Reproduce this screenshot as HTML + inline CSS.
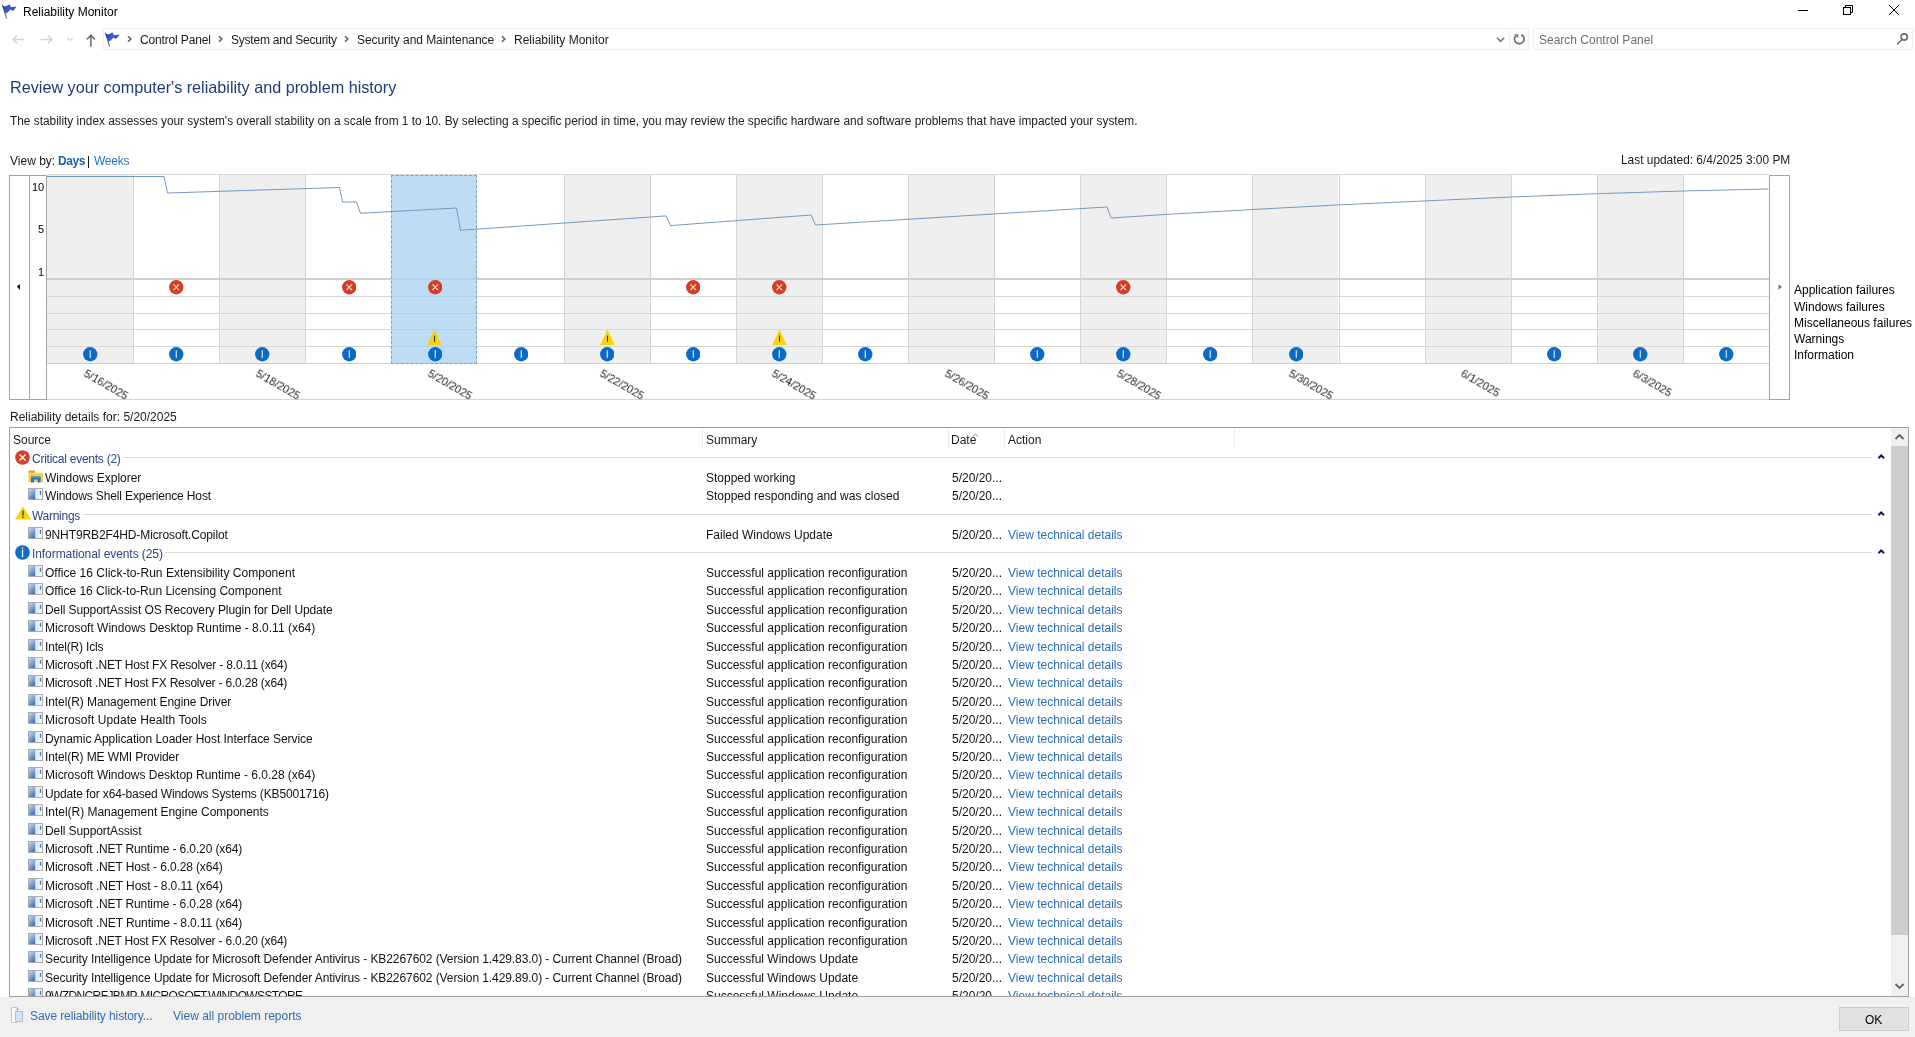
<!DOCTYPE html><html><head><meta charset="utf-8"><style>
html,body{margin:0;padding:0;}
body{width:1915px;height:1037px;position:relative;overflow:hidden;background:#fff;font-family:"Liberation Sans", sans-serif;}
.t{position:absolute;white-space:nowrap;font-family:"Liberation Sans", sans-serif;will-change:transform;}
.lnk{color:#0066cc;}
</style></head><body>
<svg width="0" height="0" style="position:absolute"><defs><linearGradient id="appg" x1="0" y1="0" x2="0.6" y2="1"><stop offset="0" stop-color="#c4daf0"/><stop offset="1" stop-color="#4677b8"/></linearGradient><symbol id="appico" viewBox="0 0 15 12"><rect x="0.5" y="0.5" width="14" height="11" fill="#f3f6fa" stroke="#a9abb0"/><rect x="1" y="1" width="6.5" height="10" fill="url(#appg)"/><rect x="7.5" y="1" width="3.5" height="10" fill="#e4ebf3"/><rect x="11.8" y="2.8" width="1.4" height="4" fill="#4b7cb6"/></symbol></defs></svg>
<svg style="position:absolute;left:0;top:0" width="20" height="20" viewBox="0 0 20 20"><defs><linearGradient id="fg" x1="0" y1="0" x2="1" y2="0.3"><stop offset="0" stop-color="#1d2f9c"/><stop offset="0.55" stop-color="#3f5fd6"/><stop offset="1" stop-color="#2f46b8"/></linearGradient></defs><path d="M2.3 4.5L6.6 18.5" stroke="#5a5a5a" stroke-width="1"/><path d="M2.2 5.8L5.8 6.4L9.3 4.2L11.2 7.2L16.6 6.4L13 10.9L10.6 9.6L7.6 12.4L5.3 13.6Z" fill="url(#fg)"/></svg>
<div class="t " style="left:22.5px;top:6px;font-size:12px;line-height:12px;color:#000;">Reliability Monitor</div>
<div style="position:absolute;left:1798px;top:10px;width:10px;height:1px;background:#000"></div>
<svg style="position:absolute;left:1840px;top:2px" width="16" height="16" viewBox="1840 2 16 16"><rect x="1843.5" y="7.5" width="7" height="7" fill="none" stroke="#000"/><path d="M1845.5 7.5V5.5H1852.5V12.5H1850.5" fill="none" stroke="#000"/></svg>
<svg style="position:absolute;left:1886px;top:2px" width="16" height="16" viewBox="1886 2 16 16"><path d="M1889 5L1899 15M1899 5L1889 15" stroke="#000" stroke-width="1"/></svg>
<svg style="position:absolute;left:0;top:28px" width="100" height="24" viewBox="0 28 100 24"><path d="M24 39.4H13.5M17 35.5L13 39.4L17 43.3" fill="none" stroke="#d2d2d2" stroke-width="1.5"/><path d="M40.5 39.4H51.5M48 35.5L52 39.4L48 43.3" fill="none" stroke="#d2d2d2" stroke-width="1.5"/><path d="M67 37.5L70 40.5L73 37.5" fill="none" stroke="#dadada" stroke-width="1.2"/><path d="M90.9 46.8V35.5M86.9 39.5L90.9 35.2L94.9 39.5" fill="none" stroke="#6a6a6a" stroke-width="1.5"/></svg>
<div style="position:absolute;left:103px;top:28px;width:1426px;height:22px;border:1px solid #f1f1f1;border-bottom-color:#ebebeb;box-sizing:border-box"></div>
<div style="position:absolute;left:1509px;top:29px;width:1px;height:20px;background:#efefef"></div>
<svg style="position:absolute;left:103px;top:28px" width="20" height="20" viewBox="0 0 20 20"><defs><linearGradient id="fg2" x1="0" y1="0" x2="1" y2="0.3"><stop offset="0" stop-color="#1d2f9c"/><stop offset="0.55" stop-color="#3f5fd6"/><stop offset="1" stop-color="#2f46b8"/></linearGradient></defs><path d="M2.3 4.5L6.6 18.5" stroke="#5a5a5a" stroke-width="1"/><path d="M2.2 5.8L5.8 6.4L9.3 4.2L11.2 7.2L16.6 6.4L13 10.9L10.6 9.6L7.6 12.4L5.3 13.6Z" fill="url(#fg2)"/></svg>
<svg style="position:absolute;left:127px;top:35px" width="5" height="8" viewBox="0 0 5 8"><path d="M1 1.2L3.8 4L1 6.8" fill="none" stroke="#5a5a5a" stroke-width="1.5"/></svg>
<svg style="position:absolute;left:218px;top:35px" width="5" height="8" viewBox="0 0 5 8"><path d="M1 1.2L3.8 4L1 6.8" fill="none" stroke="#5a5a5a" stroke-width="1.5"/></svg>
<svg style="position:absolute;left:344px;top:35px" width="5" height="8" viewBox="0 0 5 8"><path d="M1 1.2L3.8 4L1 6.8" fill="none" stroke="#5a5a5a" stroke-width="1.5"/></svg>
<svg style="position:absolute;left:501px;top:35px" width="5" height="8" viewBox="0 0 5 8"><path d="M1 1.2L3.8 4L1 6.8" fill="none" stroke="#5a5a5a" stroke-width="1.5"/></svg>
<div class="t " style="left:139.5px;top:34px;font-size:12px;line-height:12px;color:#1a1a1a;letter-spacing:-0.15px">Control Panel</div>
<div class="t " style="left:230.5px;top:34px;font-size:12px;line-height:12px;color:#1a1a1a;letter-spacing:-0.22px">System and Security</div>
<div class="t " style="left:356.5px;top:34px;font-size:12px;line-height:12px;color:#1a1a1a;letter-spacing:-0.07px">Security and Maintenance</div>
<div class="t " style="left:513.5px;top:34px;font-size:12px;line-height:12px;color:#1a1a1a;">Reliability Monitor</div>
<svg style="position:absolute;left:1490px;top:26px" width="44" height="26" viewBox="1490 26 44 26"><path d="M1497 37.8L1500.6 41.4L1504.2 37.8" fill="none" stroke="#767676" stroke-width="1.6"/><path d="M1521.3 34.6A4.8 4.8 0 1 1 1515.6 35.8" fill="none" stroke="#777" stroke-width="1.9"/><path d="M1514 34.2H1518.2V38.2Z" fill="#777"/></svg>
<div style="position:absolute;left:1533px;top:28px;width:380px;height:22px;border:1px solid #f1f1f1;border-bottom-color:#ebebeb;box-sizing:border-box"></div>
<div class="t " style="left:1538.5px;top:34px;font-size:12px;line-height:12px;color:#6d6d6d;">Search Control Panel</div>
<svg style="position:absolute;left:1880px;top:24px" width="35" height="30" viewBox="1880 24 35 30"><circle cx="1904.2" cy="37" r="3.1" fill="none" stroke="#6e6e6e" stroke-width="1.6"/><path d="M1902 39.3L1897.6 44" stroke="#6e6e6e" stroke-width="1.6" stroke-linecap="round"/></svg>
<div class="t " style="left:9.5px;top:79px;font-size:16.2px;line-height:16.2px;color:#1f3a7a;">Review your computer's reliability and problem history</div>
<div class="t " style="left:9.5px;top:116px;font-size:11.87px;line-height:11.87px;color:#1a1a1a;">The stability index assesses your system's overall stability on a scale from 1 to 10. By selecting a specific period in time, you may review the specific hardware and software problems that have impacted your system.</div>
<div class="t " style="left:9.5px;top:155px;font-size:12px;line-height:12px;color:#1a1a1a;">View by:</div>
<div class="t " style="left:58px;top:155px;font-size:12px;line-height:12px;color:#1a5fb0;letter-spacing:-0.45px"><b>Days</b></div>
<div class="t " style="left:87px;top:155px;font-size:12px;line-height:12px;color:#000;">|</div>
<div class="t " style="left:94px;top:155px;font-size:12px;line-height:12px;color:#2a74c6;letter-spacing:-0.25px">Weeks</div>
<div class="t " style="left:1621px;top:155px;font-size:11.9px;line-height:11.9px;color:#1a1a1a;">Last updated: 6/4/2025 3:00 PM</div>
<div style="position:absolute;left:9px;top:175px;width:38px;height:225px;border:1px solid #a4a4a4;box-sizing:border-box"></div>
<div style="position:absolute;left:29px;top:175px;width:1px;height:225px;background:#a4a4a4"></div>
<div style="position:absolute;left:47.00px;top:175px;width:86.10px;height:189px;background:#efefef"></div>
<div style="position:absolute;left:219.20px;top:175px;width:86.10px;height:189px;background:#efefef"></div>
<div style="position:absolute;left:563.60px;top:175px;width:86.10px;height:189px;background:#efefef"></div>
<div style="position:absolute;left:735.80px;top:175px;width:86.10px;height:189px;background:#efefef"></div>
<div style="position:absolute;left:908.00px;top:175px;width:86.10px;height:189px;background:#efefef"></div>
<div style="position:absolute;left:1080.20px;top:175px;width:86.10px;height:189px;background:#efefef"></div>
<div style="position:absolute;left:1252.40px;top:175px;width:86.10px;height:189px;background:#efefef"></div>
<div style="position:absolute;left:1424.60px;top:175px;width:86.10px;height:189px;background:#efefef"></div>
<div style="position:absolute;left:1596.80px;top:175px;width:86.10px;height:189px;background:#efefef"></div>
<div style="position:absolute;left:133.10px;top:175px;width:1px;height:189px;background:#d4d4d4"></div>
<div style="position:absolute;left:219.20px;top:175px;width:1px;height:189px;background:#d4d4d4"></div>
<div style="position:absolute;left:305.30px;top:175px;width:1px;height:189px;background:#d4d4d4"></div>
<div style="position:absolute;left:563.60px;top:175px;width:1px;height:189px;background:#d4d4d4"></div>
<div style="position:absolute;left:649.70px;top:175px;width:1px;height:189px;background:#d4d4d4"></div>
<div style="position:absolute;left:735.80px;top:175px;width:1px;height:189px;background:#d4d4d4"></div>
<div style="position:absolute;left:821.90px;top:175px;width:1px;height:189px;background:#d4d4d4"></div>
<div style="position:absolute;left:908.00px;top:175px;width:1px;height:189px;background:#d4d4d4"></div>
<div style="position:absolute;left:994.10px;top:175px;width:1px;height:189px;background:#d4d4d4"></div>
<div style="position:absolute;left:1080.20px;top:175px;width:1px;height:189px;background:#d4d4d4"></div>
<div style="position:absolute;left:1166.30px;top:175px;width:1px;height:189px;background:#d4d4d4"></div>
<div style="position:absolute;left:1252.40px;top:175px;width:1px;height:189px;background:#d4d4d4"></div>
<div style="position:absolute;left:1338.50px;top:175px;width:1px;height:189px;background:#d4d4d4"></div>
<div style="position:absolute;left:1424.60px;top:175px;width:1px;height:189px;background:#d4d4d4"></div>
<div style="position:absolute;left:1510.70px;top:175px;width:1px;height:189px;background:#d4d4d4"></div>
<div style="position:absolute;left:1596.80px;top:175px;width:1px;height:189px;background:#d4d4d4"></div>
<div style="position:absolute;left:1682.90px;top:175px;width:1px;height:189px;background:#d4d4d4"></div>
<div style="position:absolute;left:47px;top:174px;width:1722px;height:1px;background:#d8d8d8"></div>
<div style="position:absolute;left:47px;top:278px;width:1722px;height:2px;background:#cfcfcf"></div>
<div style="position:absolute;left:47px;top:296px;width:1722px;height:1px;background:#d6d6d6"></div>
<div style="position:absolute;left:47px;top:313px;width:1722px;height:1px;background:#d6d6d6"></div>
<div style="position:absolute;left:47px;top:329px;width:1722px;height:1px;background:#d6d6d6"></div>
<div style="position:absolute;left:47px;top:346px;width:1722px;height:1px;background:#d6d6d6"></div>
<div style="position:absolute;left:47px;top:363px;width:1722px;height:1px;background:#cfcfcf"></div>
<div style="position:absolute;left:47px;top:399px;width:1722px;height:1px;background:#d4d4d4"></div>
<div style="position:absolute;left:391.40px;top:175px;width:86.10px;height:189px;background:rgba(170,208,242,0.75);border:1px dashed #8a9cb0;box-sizing:border-box"></div>
<div style="position:absolute;left:1769px;top:175px;width:21px;height:225px;border:1px solid #a4a4a4;box-sizing:border-box"></div>
<svg style="position:absolute;left:16px;top:283px" width="5" height="8" viewBox="0 0 5 8"><path d="M3.9 0.9L1 3.6L3.9 7Z" fill="#000"/></svg>
<svg style="position:absolute;left:1778px;top:283px" width="5" height="8" viewBox="0 0 5 8"><path d="M0.6 1.2L3.8 3.9L0.6 6.7Z" fill="#666"/></svg>
<div class="t " style="left:32px;top:182px;font-size:11px;line-height:11px;color:#000;">10</div>
<div class="t " style="left:37.5px;top:224px;font-size:11px;line-height:11px;color:#000;">5</div>
<div class="t " style="left:37.5px;top:267px;font-size:11px;line-height:11px;color:#000;">1</div>
<svg style="position:absolute;left:0;top:0" width="1915" height="420"><polyline points="47,176.5 164,176.5 167.5,193 339.5,187.5 342.5,202 356.5,202 360.5,213.3 456.5,208 460.5,230.3 666,215.9 670.5,225.6 811,215 815.5,225 1107,207 1111,218 1166.4,214.4 1252.6,209.5 1339,204.9 1425.3,200.9 1511.8,197 1597.4,193.7 1683.6,191 1768.5,189" fill="none" stroke="#7499c4" stroke-width="1"/></svg>
<svg style="position:absolute;left:83.25px;top:347.45px" width="14.5" height="14.5" viewBox="0 0 16 16"><circle cx="8" cy="8" r="7.9" fill="#0b6bc4"/><rect x="7.4" y="3.6" width="1.2" height="8.4" fill="#e6f4ff"/></svg>
<svg style="position:absolute;left:169.35px;top:347.45px" width="14.5" height="14.5" viewBox="0 0 16 16"><circle cx="8" cy="8" r="7.9" fill="#0b6bc4"/><rect x="7.4" y="3.6" width="1.2" height="8.4" fill="#e6f4ff"/></svg>
<svg style="position:absolute;left:255.45px;top:347.45px" width="14.5" height="14.5" viewBox="0 0 16 16"><circle cx="8" cy="8" r="7.9" fill="#0b6bc4"/><rect x="7.4" y="3.6" width="1.2" height="8.4" fill="#e6f4ff"/></svg>
<svg style="position:absolute;left:341.55px;top:347.45px" width="14.5" height="14.5" viewBox="0 0 16 16"><circle cx="8" cy="8" r="7.9" fill="#0b6bc4"/><rect x="7.4" y="3.6" width="1.2" height="8.4" fill="#e6f4ff"/></svg>
<svg style="position:absolute;left:427.65px;top:347.45px" width="14.5" height="14.5" viewBox="0 0 16 16"><circle cx="8" cy="8" r="7.9" fill="#0b6bc4"/><rect x="7.4" y="3.6" width="1.2" height="8.4" fill="#e6f4ff"/></svg>
<svg style="position:absolute;left:513.75px;top:347.45px" width="14.5" height="14.5" viewBox="0 0 16 16"><circle cx="8" cy="8" r="7.9" fill="#0b6bc4"/><rect x="7.4" y="3.6" width="1.2" height="8.4" fill="#e6f4ff"/></svg>
<svg style="position:absolute;left:599.85px;top:347.45px" width="14.5" height="14.5" viewBox="0 0 16 16"><circle cx="8" cy="8" r="7.9" fill="#0b6bc4"/><rect x="7.4" y="3.6" width="1.2" height="8.4" fill="#e6f4ff"/></svg>
<svg style="position:absolute;left:685.95px;top:347.45px" width="14.5" height="14.5" viewBox="0 0 16 16"><circle cx="8" cy="8" r="7.9" fill="#0b6bc4"/><rect x="7.4" y="3.6" width="1.2" height="8.4" fill="#e6f4ff"/></svg>
<svg style="position:absolute;left:772.05px;top:347.45px" width="14.5" height="14.5" viewBox="0 0 16 16"><circle cx="8" cy="8" r="7.9" fill="#0b6bc4"/><rect x="7.4" y="3.6" width="1.2" height="8.4" fill="#e6f4ff"/></svg>
<svg style="position:absolute;left:858.15px;top:347.45px" width="14.5" height="14.5" viewBox="0 0 16 16"><circle cx="8" cy="8" r="7.9" fill="#0b6bc4"/><rect x="7.4" y="3.6" width="1.2" height="8.4" fill="#e6f4ff"/></svg>
<svg style="position:absolute;left:1030.35px;top:347.45px" width="14.5" height="14.5" viewBox="0 0 16 16"><circle cx="8" cy="8" r="7.9" fill="#0b6bc4"/><rect x="7.4" y="3.6" width="1.2" height="8.4" fill="#e6f4ff"/></svg>
<svg style="position:absolute;left:1116.45px;top:347.45px" width="14.5" height="14.5" viewBox="0 0 16 16"><circle cx="8" cy="8" r="7.9" fill="#0b6bc4"/><rect x="7.4" y="3.6" width="1.2" height="8.4" fill="#e6f4ff"/></svg>
<svg style="position:absolute;left:1202.55px;top:347.45px" width="14.5" height="14.5" viewBox="0 0 16 16"><circle cx="8" cy="8" r="7.9" fill="#0b6bc4"/><rect x="7.4" y="3.6" width="1.2" height="8.4" fill="#e6f4ff"/></svg>
<svg style="position:absolute;left:1288.65px;top:347.45px" width="14.5" height="14.5" viewBox="0 0 16 16"><circle cx="8" cy="8" r="7.9" fill="#0b6bc4"/><rect x="7.4" y="3.6" width="1.2" height="8.4" fill="#e6f4ff"/></svg>
<svg style="position:absolute;left:1546.95px;top:347.45px" width="14.5" height="14.5" viewBox="0 0 16 16"><circle cx="8" cy="8" r="7.9" fill="#0b6bc4"/><rect x="7.4" y="3.6" width="1.2" height="8.4" fill="#e6f4ff"/></svg>
<svg style="position:absolute;left:1633.05px;top:347.45px" width="14.5" height="14.5" viewBox="0 0 16 16"><circle cx="8" cy="8" r="7.9" fill="#0b6bc4"/><rect x="7.4" y="3.6" width="1.2" height="8.4" fill="#e6f4ff"/></svg>
<svg style="position:absolute;left:1719.15px;top:347.45px" width="14.5" height="14.5" viewBox="0 0 16 16"><circle cx="8" cy="8" r="7.9" fill="#0b6bc4"/><rect x="7.4" y="3.6" width="1.2" height="8.4" fill="#e6f4ff"/></svg>
<svg style="position:absolute;left:169.35px;top:280.45px" width="14.5" height="14.5" viewBox="0 0 16 16"><circle cx="8" cy="8" r="7.9" fill="#d63c22"/><path d="M4.9 4.9L11.1 11.1M11.1 4.9L4.9 11.1" stroke="#fbe3dc" stroke-width="1.2"/></svg>
<svg style="position:absolute;left:341.55px;top:280.45px" width="14.5" height="14.5" viewBox="0 0 16 16"><circle cx="8" cy="8" r="7.9" fill="#d63c22"/><path d="M4.9 4.9L11.1 11.1M11.1 4.9L4.9 11.1" stroke="#fbe3dc" stroke-width="1.2"/></svg>
<svg style="position:absolute;left:427.65px;top:280.45px" width="14.5" height="14.5" viewBox="0 0 16 16"><circle cx="8" cy="8" r="7.9" fill="#d63c22"/><path d="M4.9 4.9L11.1 11.1M11.1 4.9L4.9 11.1" stroke="#fbe3dc" stroke-width="1.2"/></svg>
<svg style="position:absolute;left:685.95px;top:280.45px" width="14.5" height="14.5" viewBox="0 0 16 16"><circle cx="8" cy="8" r="7.9" fill="#d63c22"/><path d="M4.9 4.9L11.1 11.1M11.1 4.9L4.9 11.1" stroke="#fbe3dc" stroke-width="1.2"/></svg>
<svg style="position:absolute;left:772.05px;top:280.45px" width="14.5" height="14.5" viewBox="0 0 16 16"><circle cx="8" cy="8" r="7.9" fill="#d63c22"/><path d="M4.9 4.9L11.1 11.1M11.1 4.9L4.9 11.1" stroke="#fbe3dc" stroke-width="1.2"/></svg>
<svg style="position:absolute;left:1116.45px;top:280.45px" width="14.5" height="14.5" viewBox="0 0 16 16"><circle cx="8" cy="8" r="7.9" fill="#d63c22"/><path d="M4.9 4.9L11.1 11.1M11.1 4.9L4.9 11.1" stroke="#fbe3dc" stroke-width="1.2"/></svg>
<svg style="position:absolute;left:427.40px;top:329px" width="15" height="17" viewBox="0 0 16 17"><path d="M8 0.3L15.9 16.6H0.1Z" fill="#f3d40c"/><rect x="7.45" y="6.5" width="1.1" height="6.5" fill="#3a3000"/></svg>
<svg style="position:absolute;left:599.60px;top:329px" width="15" height="17" viewBox="0 0 16 17"><path d="M8 0.3L15.9 16.6H0.1Z" fill="#f3d40c"/><rect x="7.45" y="6.5" width="1.1" height="6.5" fill="#3a3000"/></svg>
<svg style="position:absolute;left:771.80px;top:329px" width="15" height="17" viewBox="0 0 16 17"><path d="M8 0.3L15.9 16.6H0.1Z" fill="#f3d40c"/><rect x="7.45" y="6.5" width="1.1" height="6.5" fill="#3a3000"/></svg>
<div class="t" style="left:87.5px;top:367px;font-size:11px;line-height:13px;color:#222;transform:rotate(30deg);transform-origin:0 0">5/16/2025</div>
<div class="t" style="left:259.7px;top:367px;font-size:11px;line-height:13px;color:#222;transform:rotate(30deg);transform-origin:0 0">5/18/2025</div>
<div class="t" style="left:431.9px;top:367px;font-size:11px;line-height:13px;color:#222;transform:rotate(30deg);transform-origin:0 0">5/20/2025</div>
<div class="t" style="left:604.1px;top:367px;font-size:11px;line-height:13px;color:#222;transform:rotate(30deg);transform-origin:0 0">5/22/2025</div>
<div class="t" style="left:776.3px;top:367px;font-size:11px;line-height:13px;color:#222;transform:rotate(30deg);transform-origin:0 0">5/24/2025</div>
<div class="t" style="left:948.5px;top:367px;font-size:11px;line-height:13px;color:#222;transform:rotate(30deg);transform-origin:0 0">5/26/2025</div>
<div class="t" style="left:1120.7px;top:367px;font-size:11px;line-height:13px;color:#222;transform:rotate(30deg);transform-origin:0 0">5/28/2025</div>
<div class="t" style="left:1292.9px;top:367px;font-size:11px;line-height:13px;color:#222;transform:rotate(30deg);transform-origin:0 0">5/30/2025</div>
<div class="t" style="left:1465.1px;top:367px;font-size:11px;line-height:13px;color:#222;transform:rotate(30deg);transform-origin:0 0">6/1/2025</div>
<div class="t" style="left:1637.3px;top:367px;font-size:11px;line-height:13px;color:#222;transform:rotate(30deg);transform-origin:0 0">6/3/2025</div>
<div class="t " style="left:1793.5px;top:284px;font-size:12px;line-height:12px;color:#000;">Application failures</div>
<div class="t " style="left:1793.5px;top:301px;font-size:12px;line-height:12px;color:#000;">Windows failures</div>
<div class="t " style="left:1793.5px;top:317px;font-size:12px;line-height:12px;color:#000;">Miscellaneous failures</div>
<div class="t " style="left:1793.5px;top:333px;font-size:12px;line-height:12px;color:#000;">Warnings</div>
<div class="t " style="left:1793.5px;top:349px;font-size:12px;line-height:12px;color:#000;">Information</div>
<div class="t " style="left:9.5px;top:411px;font-size:12px;line-height:12px;color:#1a1a1a;">Reliability details for: 5/20/2025</div>
<div style="position:absolute;left:9px;top:427px;width:1900px;height:570px;border:1px solid #a0a0a0;box-sizing:border-box"></div>
<div class="t " style="left:12.5px;top:434px;font-size:12px;line-height:12px;color:#1a1a1a;">Source</div>
<div class="t " style="left:706px;top:434px;font-size:12px;line-height:12px;color:#1a1a1a;">Summary</div>
<div class="t " style="left:951px;top:434px;font-size:12px;line-height:12px;color:#1a1a1a;">Date</div>
<svg style="position:absolute;left:972px;top:433px" width="7" height="4" viewBox="0 0 7 4"><path d="M0.8 3.4L3.3 0.9L6.2 3.7" fill="none" stroke="#8a8a8a" stroke-width="1"/></svg>
<div class="t " style="left:1007.5px;top:434px;font-size:12px;line-height:12px;color:#1a1a1a;">Action</div>
<div style="position:absolute;left:702px;top:429px;width:1px;height:19px;background:#ededed"></div>
<div style="position:absolute;left:948px;top:429px;width:1px;height:19px;background:#ededed"></div>
<div style="position:absolute;left:1004px;top:429px;width:1px;height:19px;background:#ededed"></div>
<div style="position:absolute;left:1234px;top:429px;width:1px;height:19px;background:#ededed"></div>
<div style="position:absolute;left:1891px;top:428px;width:17px;height:568px;background:#f0f0f0"></div>
<div style="position:absolute;left:1891px;top:446px;width:17px;height:489px;background:#cdcdcd"></div>
<svg style="position:absolute;left:1894px;top:433px" width="11" height="7" viewBox="0 0 11 7"><path d="M1.5 6L5.5 2L9.5 6" fill="none" stroke="#606060" stroke-width="1.8"/></svg>
<svg style="position:absolute;left:1894px;top:983px" width="11" height="7" viewBox="0 0 11 7"><path d="M1.5 1L5.5 5L9.5 1" fill="none" stroke="#606060" stroke-width="1.8"/></svg>
<div style="position:absolute;left:10px;top:449px;width:1881px;height:547px;overflow:hidden">
<svg style="position:absolute;left:4.5px;top:0.9px" width="15" height="15" viewBox="0 0 16 16"><circle cx="8" cy="8" r="7.8" fill="#d4402b"/><path d="M4.8 4.8L11.2 11.2M11.2 4.8L4.8 11.2" stroke="#fff" stroke-width="1.3"/></svg>
<div class="t" style="left:21.5px;top:4.00px;font-size:12px;line-height:12px;color:#2e4582;letter-spacing:-0.250px">Critical events (2)</div>
<div class="gline" style="position:absolute;left:113.1px;top:8px;width:1748.9px;height:1px;background:#dcdcdc"></div>
<svg style="position:absolute;left:1867px;top:5px" width="9" height="6" viewBox="0 0 9 6"><path d="M1.5 4.2L4.2 1.4L7 4.2" fill="none" stroke="#0c1a5c" stroke-width="2"/></svg>
<svg style="position:absolute;left:18px;top:20.5px" width="16" height="13" viewBox="0 0 16 13"><rect x="0.5" y="0.5" width="6.5" height="2.6" fill="#d6a21c"/><rect x="0.5" y="2.8" width="14.6" height="9.2" fill="#f6cb4c"/><rect x="0.5" y="2.8" width="14.6" height="1.2" fill="#fbd968"/><path d="M3 12.6V7.6Q3 6.6 4 6.6H11.6Q12.6 6.6 12.6 7.6V12.6H9.6V9.6H6V12.6Z" fill="#2f76b8"/><rect x="3" y="6.6" width="9.6" height="1.4" fill="#3a98d0"/></svg>
<div class="t" style="left:34.5px;top:23.00px;font-size:12px;line-height:12px;color:#111;letter-spacing:-0.027px">Windows Explorer</div>
<div class="t" style="left:696px;top:23.00px;font-size:12px;line-height:12px;color:#111">Stopped working</div>
<div class="t" style="left:941.5px;top:23.00px;font-size:12px;line-height:12px;color:#111">5/20/20...</div>
<svg style="position:absolute;left:18px;top:39px" width="15" height="12" viewBox="0 0 15 12"><use href="#appico"/></svg>
<div class="t" style="left:34.5px;top:41.00px;font-size:12px;line-height:12px;color:#111;letter-spacing:-0.143px">Windows Shell Experience Host</div>
<div class="t" style="left:696px;top:41.00px;font-size:12px;line-height:12px;color:#111">Stopped responding and was closed</div>
<div class="t" style="left:941.5px;top:41.00px;font-size:12px;line-height:12px;color:#111">5/20/20...</div>
<svg style="position:absolute;left:4.5px;top:56.8px" width="16" height="14" viewBox="0 0 16 14"><path d="M8 0.2L15.9 13.4H0.1Z" fill="#f4d20e"/><rect x="7.35" y="4.6" width="1.3" height="5" fill="#3b3000"/><rect x="7.35" y="10.6" width="1.3" height="1.3" fill="#3b3000"/></svg>
<div class="t" style="left:21.5px;top:61.00px;font-size:12px;line-height:12px;color:#2e4582;letter-spacing:-0.280px">Warnings</div>
<div class="gline" style="position:absolute;left:72.5px;top:65px;width:1789.5px;height:1px;background:#dcdcdc"></div>
<svg style="position:absolute;left:1867px;top:62px" width="9" height="6" viewBox="0 0 9 6"><path d="M1.5 4.2L4.2 1.4L7 4.2" fill="none" stroke="#0c1a5c" stroke-width="2"/></svg>
<svg style="position:absolute;left:18px;top:78px" width="15" height="12" viewBox="0 0 15 12"><use href="#appico"/></svg>
<div class="t" style="left:34.5px;top:80.00px;font-size:12px;line-height:12px;color:#111;letter-spacing:-0.110px">9NHT9RB2F4HD-Microsoft.Copilot</div>
<div class="t" style="left:696px;top:80.00px;font-size:12px;line-height:12px;color:#111">Failed Windows Update</div>
<div class="t" style="left:941.5px;top:80.00px;font-size:12px;line-height:12px;color:#111">5/20/20...</div>
<div class="t" style="left:997.5px;top:80.00px;font-size:12px;line-height:12px;color:#2b6db8">View technical details</div>
<svg style="position:absolute;left:4.5px;top:95.9px" width="15" height="15" viewBox="0 0 16 16"><circle cx="8" cy="8" r="7.8" fill="#0d6ec6"/><rect x="7.3" y="5" width="1.4" height="8" fill="#fff"/><rect x="7.3" y="2.8" width="1.4" height="1.4" fill="#fff"/></svg>
<div class="t" style="left:21.5px;top:99.00px;font-size:12px;line-height:12px;color:#2e4582;letter-spacing:-0.075px">Informational events (25)</div>
<div class="gline" style="position:absolute;left:155.4px;top:103px;width:1706.6px;height:1px;background:#dcdcdc"></div>
<svg style="position:absolute;left:1867px;top:100px" width="9" height="6" viewBox="0 0 9 6"><path d="M1.5 4.2L4.2 1.4L7 4.2" fill="none" stroke="#0c1a5c" stroke-width="2"/></svg>
<svg style="position:absolute;left:18px;top:116px" width="15" height="12" viewBox="0 0 15 12"><use href="#appico"/></svg>
<div class="t" style="left:34.5px;top:118.00px;font-size:12px;line-height:12px;color:#111;letter-spacing:0.018px">Office 16 Click-to-Run Extensibility Component</div>
<div class="t" style="left:696px;top:118.00px;font-size:12px;line-height:12px;color:#111">Successful application reconfiguration</div>
<div class="t" style="left:941.5px;top:118.00px;font-size:12px;line-height:12px;color:#111">5/20/20...</div>
<div class="t" style="left:997.5px;top:118.00px;font-size:12px;line-height:12px;color:#2b6db8">View technical details</div>
<svg style="position:absolute;left:18px;top:134px" width="15" height="12" viewBox="0 0 15 12"><use href="#appico"/></svg>
<div class="t" style="left:34.5px;top:136.00px;font-size:12px;line-height:12px;color:#111;letter-spacing:-0.002px">Office 16 Click-to-Run Licensing Component</div>
<div class="t" style="left:696px;top:136.00px;font-size:12px;line-height:12px;color:#111">Successful application reconfiguration</div>
<div class="t" style="left:941.5px;top:136.00px;font-size:12px;line-height:12px;color:#111">5/20/20...</div>
<div class="t" style="left:997.5px;top:136.00px;font-size:12px;line-height:12px;color:#2b6db8">View technical details</div>
<svg style="position:absolute;left:18px;top:153px" width="15" height="12" viewBox="0 0 15 12"><use href="#appico"/></svg>
<div class="t" style="left:34.5px;top:155.00px;font-size:12px;line-height:12px;color:#111;letter-spacing:-0.100px">Dell SupportAssist OS Recovery Plugin for Dell Update</div>
<div class="t" style="left:696px;top:155.00px;font-size:12px;line-height:12px;color:#111">Successful application reconfiguration</div>
<div class="t" style="left:941.5px;top:155.00px;font-size:12px;line-height:12px;color:#111">5/20/20...</div>
<div class="t" style="left:997.5px;top:155.00px;font-size:12px;line-height:12px;color:#2b6db8">View technical details</div>
<svg style="position:absolute;left:18px;top:171px" width="15" height="12" viewBox="0 0 15 12"><use href="#appico"/></svg>
<div class="t" style="left:34.5px;top:173.00px;font-size:12px;line-height:12px;color:#111;letter-spacing:0.009px">Microsoft Windows Desktop Runtime - 8.0.11 (x64)</div>
<div class="t" style="left:696px;top:173.00px;font-size:12px;line-height:12px;color:#111">Successful application reconfiguration</div>
<div class="t" style="left:941.5px;top:173.00px;font-size:12px;line-height:12px;color:#111">5/20/20...</div>
<div class="t" style="left:997.5px;top:173.00px;font-size:12px;line-height:12px;color:#2b6db8">View technical details</div>
<svg style="position:absolute;left:18px;top:190px" width="15" height="12" viewBox="0 0 15 12"><use href="#appico"/></svg>
<div class="t" style="left:34.5px;top:192.00px;font-size:12px;line-height:12px;color:#111;letter-spacing:-0.183px">Intel(R) Icls</div>
<div class="t" style="left:696px;top:192.00px;font-size:12px;line-height:12px;color:#111">Successful application reconfiguration</div>
<div class="t" style="left:941.5px;top:192.00px;font-size:12px;line-height:12px;color:#111">5/20/20...</div>
<div class="t" style="left:997.5px;top:192.00px;font-size:12px;line-height:12px;color:#2b6db8">View technical details</div>
<svg style="position:absolute;left:18px;top:208px" width="15" height="12" viewBox="0 0 15 12"><use href="#appico"/></svg>
<div class="t" style="left:34.5px;top:210.00px;font-size:12px;line-height:12px;color:#111;letter-spacing:-0.173px">Microsoft .NET Host FX Resolver - 8.0.11 (x64)</div>
<div class="t" style="left:696px;top:210.00px;font-size:12px;line-height:12px;color:#111">Successful application reconfiguration</div>
<div class="t" style="left:941.5px;top:210.00px;font-size:12px;line-height:12px;color:#111">5/20/20...</div>
<div class="t" style="left:997.5px;top:210.00px;font-size:12px;line-height:12px;color:#2b6db8">View technical details</div>
<svg style="position:absolute;left:18px;top:226px" width="15" height="12" viewBox="0 0 15 12"><use href="#appico"/></svg>
<div class="t" style="left:34.5px;top:228.00px;font-size:12px;line-height:12px;color:#111;letter-spacing:-0.196px">Microsoft .NET Host FX Resolver - 6.0.28 (x64)</div>
<div class="t" style="left:696px;top:228.00px;font-size:12px;line-height:12px;color:#111">Successful application reconfiguration</div>
<div class="t" style="left:941.5px;top:228.00px;font-size:12px;line-height:12px;color:#111">5/20/20...</div>
<div class="t" style="left:997.5px;top:228.00px;font-size:12px;line-height:12px;color:#2b6db8">View technical details</div>
<svg style="position:absolute;left:18px;top:245px" width="15" height="12" viewBox="0 0 15 12"><use href="#appico"/></svg>
<div class="t" style="left:34.5px;top:247.00px;font-size:12px;line-height:12px;color:#111;letter-spacing:-0.075px">Intel(R) Management Engine Driver</div>
<div class="t" style="left:696px;top:247.00px;font-size:12px;line-height:12px;color:#111">Successful application reconfiguration</div>
<div class="t" style="left:941.5px;top:247.00px;font-size:12px;line-height:12px;color:#111">5/20/20...</div>
<div class="t" style="left:997.5px;top:247.00px;font-size:12px;line-height:12px;color:#2b6db8">View technical details</div>
<svg style="position:absolute;left:18px;top:263px" width="15" height="12" viewBox="0 0 15 12"><use href="#appico"/></svg>
<div class="t" style="left:34.5px;top:265.00px;font-size:12px;line-height:12px;color:#111;letter-spacing:0.071px">Microsoft Update Health Tools</div>
<div class="t" style="left:696px;top:265.00px;font-size:12px;line-height:12px;color:#111">Successful application reconfiguration</div>
<div class="t" style="left:941.5px;top:265.00px;font-size:12px;line-height:12px;color:#111">5/20/20...</div>
<div class="t" style="left:997.5px;top:265.00px;font-size:12px;line-height:12px;color:#2b6db8">View technical details</div>
<svg style="position:absolute;left:18px;top:282px" width="15" height="12" viewBox="0 0 15 12"><use href="#appico"/></svg>
<div class="t" style="left:34.5px;top:284.00px;font-size:12px;line-height:12px;color:#111;letter-spacing:-0.050px">Dynamic Application Loader Host Interface Service</div>
<div class="t" style="left:696px;top:284.00px;font-size:12px;line-height:12px;color:#111">Successful application reconfiguration</div>
<div class="t" style="left:941.5px;top:284.00px;font-size:12px;line-height:12px;color:#111">5/20/20...</div>
<div class="t" style="left:997.5px;top:284.00px;font-size:12px;line-height:12px;color:#2b6db8">View technical details</div>
<svg style="position:absolute;left:18px;top:300px" width="15" height="12" viewBox="0 0 15 12"><use href="#appico"/></svg>
<div class="t" style="left:34.5px;top:302.00px;font-size:12px;line-height:12px;color:#111;letter-spacing:-0.109px">Intel(R) ME WMI Provider</div>
<div class="t" style="left:696px;top:302.00px;font-size:12px;line-height:12px;color:#111">Successful application reconfiguration</div>
<div class="t" style="left:941.5px;top:302.00px;font-size:12px;line-height:12px;color:#111">5/20/20...</div>
<div class="t" style="left:997.5px;top:302.00px;font-size:12px;line-height:12px;color:#2b6db8">View technical details</div>
<svg style="position:absolute;left:18px;top:318px" width="15" height="12" viewBox="0 0 15 12"><use href="#appico"/></svg>
<div class="t" style="left:34.5px;top:320.00px;font-size:12px;line-height:12px;color:#111;letter-spacing:-0.013px">Microsoft Windows Desktop Runtime - 6.0.28 (x64)</div>
<div class="t" style="left:696px;top:320.00px;font-size:12px;line-height:12px;color:#111">Successful application reconfiguration</div>
<div class="t" style="left:941.5px;top:320.00px;font-size:12px;line-height:12px;color:#111">5/20/20...</div>
<div class="t" style="left:997.5px;top:320.00px;font-size:12px;line-height:12px;color:#2b6db8">View technical details</div>
<svg style="position:absolute;left:18px;top:337px" width="15" height="12" viewBox="0 0 15 12"><use href="#appico"/></svg>
<div class="t" style="left:34.5px;top:339.00px;font-size:12px;line-height:12px;color:#111;letter-spacing:-0.143px">Update for x64-based Windows Systems (KB5001716)</div>
<div class="t" style="left:696px;top:339.00px;font-size:12px;line-height:12px;color:#111">Successful application reconfiguration</div>
<div class="t" style="left:941.5px;top:339.00px;font-size:12px;line-height:12px;color:#111">5/20/20...</div>
<div class="t" style="left:997.5px;top:339.00px;font-size:12px;line-height:12px;color:#2b6db8">View technical details</div>
<svg style="position:absolute;left:18px;top:355px" width="15" height="12" viewBox="0 0 15 12"><use href="#appico"/></svg>
<div class="t" style="left:34.5px;top:357.00px;font-size:12px;line-height:12px;color:#111;letter-spacing:-0.028px">Intel(R) Management Engine Components</div>
<div class="t" style="left:696px;top:357.00px;font-size:12px;line-height:12px;color:#111">Successful application reconfiguration</div>
<div class="t" style="left:941.5px;top:357.00px;font-size:12px;line-height:12px;color:#111">5/20/20...</div>
<div class="t" style="left:997.5px;top:357.00px;font-size:12px;line-height:12px;color:#2b6db8">View technical details</div>
<svg style="position:absolute;left:18px;top:374px" width="15" height="12" viewBox="0 0 15 12"><use href="#appico"/></svg>
<div class="t" style="left:34.5px;top:376.00px;font-size:12px;line-height:12px;color:#111;letter-spacing:-0.088px">Dell SupportAssist</div>
<div class="t" style="left:696px;top:376.00px;font-size:12px;line-height:12px;color:#111">Successful application reconfiguration</div>
<div class="t" style="left:941.5px;top:376.00px;font-size:12px;line-height:12px;color:#111">5/20/20...</div>
<div class="t" style="left:997.5px;top:376.00px;font-size:12px;line-height:12px;color:#2b6db8">View technical details</div>
<svg style="position:absolute;left:18px;top:392px" width="15" height="12" viewBox="0 0 15 12"><use href="#appico"/></svg>
<div class="t" style="left:34.5px;top:394.00px;font-size:12px;line-height:12px;color:#111;letter-spacing:-0.128px">Microsoft .NET Runtime - 6.0.20 (x64)</div>
<div class="t" style="left:696px;top:394.00px;font-size:12px;line-height:12px;color:#111">Successful application reconfiguration</div>
<div class="t" style="left:941.5px;top:394.00px;font-size:12px;line-height:12px;color:#111">5/20/20...</div>
<div class="t" style="left:997.5px;top:394.00px;font-size:12px;line-height:12px;color:#2b6db8">View technical details</div>
<svg style="position:absolute;left:18px;top:410px" width="15" height="12" viewBox="0 0 15 12"><use href="#appico"/></svg>
<div class="t" style="left:34.5px;top:412.00px;font-size:12px;line-height:12px;color:#111;letter-spacing:-0.121px">Microsoft .NET Host - 6.0.28 (x64)</div>
<div class="t" style="left:696px;top:412.00px;font-size:12px;line-height:12px;color:#111">Successful application reconfiguration</div>
<div class="t" style="left:941.5px;top:412.00px;font-size:12px;line-height:12px;color:#111">5/20/20...</div>
<div class="t" style="left:997.5px;top:412.00px;font-size:12px;line-height:12px;color:#2b6db8">View technical details</div>
<svg style="position:absolute;left:18px;top:429px" width="15" height="12" viewBox="0 0 15 12"><use href="#appico"/></svg>
<div class="t" style="left:34.5px;top:431.00px;font-size:12px;line-height:12px;color:#111;letter-spacing:-0.091px">Microsoft .NET Host - 8.0.11 (x64)</div>
<div class="t" style="left:696px;top:431.00px;font-size:12px;line-height:12px;color:#111">Successful application reconfiguration</div>
<div class="t" style="left:941.5px;top:431.00px;font-size:12px;line-height:12px;color:#111">5/20/20...</div>
<div class="t" style="left:997.5px;top:431.00px;font-size:12px;line-height:12px;color:#2b6db8">View technical details</div>
<svg style="position:absolute;left:18px;top:447px" width="15" height="12" viewBox="0 0 15 12"><use href="#appico"/></svg>
<div class="t" style="left:34.5px;top:449.00px;font-size:12px;line-height:12px;color:#111;letter-spacing:-0.128px">Microsoft .NET Runtime - 6.0.28 (x64)</div>
<div class="t" style="left:696px;top:449.00px;font-size:12px;line-height:12px;color:#111">Successful application reconfiguration</div>
<div class="t" style="left:941.5px;top:449.00px;font-size:12px;line-height:12px;color:#111">5/20/20...</div>
<div class="t" style="left:997.5px;top:449.00px;font-size:12px;line-height:12px;color:#2b6db8">View technical details</div>
<svg style="position:absolute;left:18px;top:466px" width="15" height="12" viewBox="0 0 15 12"><use href="#appico"/></svg>
<div class="t" style="left:34.5px;top:468.00px;font-size:12px;line-height:12px;color:#111;letter-spacing:-0.100px">Microsoft .NET Runtime - 8.0.11 (x64)</div>
<div class="t" style="left:696px;top:468.00px;font-size:12px;line-height:12px;color:#111">Successful application reconfiguration</div>
<div class="t" style="left:941.5px;top:468.00px;font-size:12px;line-height:12px;color:#111">5/20/20...</div>
<div class="t" style="left:997.5px;top:468.00px;font-size:12px;line-height:12px;color:#2b6db8">View technical details</div>
<svg style="position:absolute;left:18px;top:484px" width="15" height="12" viewBox="0 0 15 12"><use href="#appico"/></svg>
<div class="t" style="left:34.5px;top:486.00px;font-size:12px;line-height:12px;color:#111;letter-spacing:-0.196px">Microsoft .NET Host FX Resolver - 6.0.20 (x64)</div>
<div class="t" style="left:696px;top:486.00px;font-size:12px;line-height:12px;color:#111">Successful application reconfiguration</div>
<div class="t" style="left:941.5px;top:486.00px;font-size:12px;line-height:12px;color:#111">5/20/20...</div>
<div class="t" style="left:997.5px;top:486.00px;font-size:12px;line-height:12px;color:#2b6db8">View technical details</div>
<svg style="position:absolute;left:18px;top:502px" width="15" height="12" viewBox="0 0 15 12"><use href="#appico"/></svg>
<div class="t" style="left:34.5px;top:504.00px;font-size:12px;line-height:12px;color:#111;letter-spacing:-0.084px">Security Intelligence Update for Microsoft Defender Antivirus - KB2267602 (Version 1.429.83.0) - Current Channel (Broad)</div>
<div class="t" style="left:696px;top:504.00px;font-size:12px;line-height:12px;color:#111">Successful Windows Update</div>
<div class="t" style="left:941.5px;top:504.00px;font-size:12px;line-height:12px;color:#111">5/20/20...</div>
<div class="t" style="left:997.5px;top:504.00px;font-size:12px;line-height:12px;color:#2b6db8">View technical details</div>
<svg style="position:absolute;left:18px;top:521px" width="15" height="12" viewBox="0 0 15 12"><use href="#appico"/></svg>
<div class="t" style="left:34.5px;top:523.00px;font-size:12px;line-height:12px;color:#111;letter-spacing:-0.084px">Security Intelligence Update for Microsoft Defender Antivirus - KB2267602 (Version 1.429.89.0) - Current Channel (Broad)</div>
<div class="t" style="left:696px;top:523.00px;font-size:12px;line-height:12px;color:#111">Successful Windows Update</div>
<div class="t" style="left:941.5px;top:523.00px;font-size:12px;line-height:12px;color:#111">5/20/20...</div>
<div class="t" style="left:997.5px;top:523.00px;font-size:12px;line-height:12px;color:#2b6db8">View technical details</div>
<svg style="position:absolute;left:18px;top:539px" width="15" height="12" viewBox="0 0 15 12"><use href="#appico"/></svg>
<div class="t" style="left:34.5px;top:541.00px;font-size:12px;line-height:12px;color:#111;letter-spacing:-0.618px">9WZDNCRFJBMP-MICROSOFT.WINDOWSSTORE</div>
<div class="t" style="left:696px;top:541.00px;font-size:12px;line-height:12px;color:#111">Successful Windows Update</div>
<div class="t" style="left:941.5px;top:541.00px;font-size:12px;line-height:12px;color:#111">5/20/20...</div>
<div class="t" style="left:997.5px;top:541.00px;font-size:12px;line-height:12px;color:#2b6db8">View technical details</div>
</div>
<div style="position:absolute;left:0px;top:997px;width:1915px;height:40px;background:#f0f0f0"></div>
<div style="position:absolute;left:9px;top:996px;width:1900px;height:1px;background:#a0a0a0"></div>
<svg style="position:absolute;left:5px;top:1000px" width="30" height="30" viewBox="5 1000 30 30"><path d="M11.5 1007.5H17V1022.5H11.5Z" fill="#f6f8fb" stroke="#c3c7cc"/><path d="M15.5 1011.5H22.5V1021.5H15.5Z" fill="#d3e4f6" stroke="#b2bccb"/><circle cx="17.7" cy="1009.3" r="1" fill="#c99a86"/></svg>
<div class="t " style="left:29.5px;top:1010px;font-size:12px;line-height:12px;color:#2e6cb4;letter-spacing:-0.1px">Save reliability history...</div>
<div class="t " style="left:172.5px;top:1010px;font-size:12px;line-height:12px;color:#2e6cb4;">View all problem reports</div>
<div style="position:absolute;left:1839px;top:1007px;width:70px;height:24px;background:#e1e1e1;border:1px solid #cccccc;box-sizing:border-box"></div>
<div class="t " style="left:1865px;top:1014px;font-size:12px;line-height:12px;color:#000;">OK</div>
</body></html>
